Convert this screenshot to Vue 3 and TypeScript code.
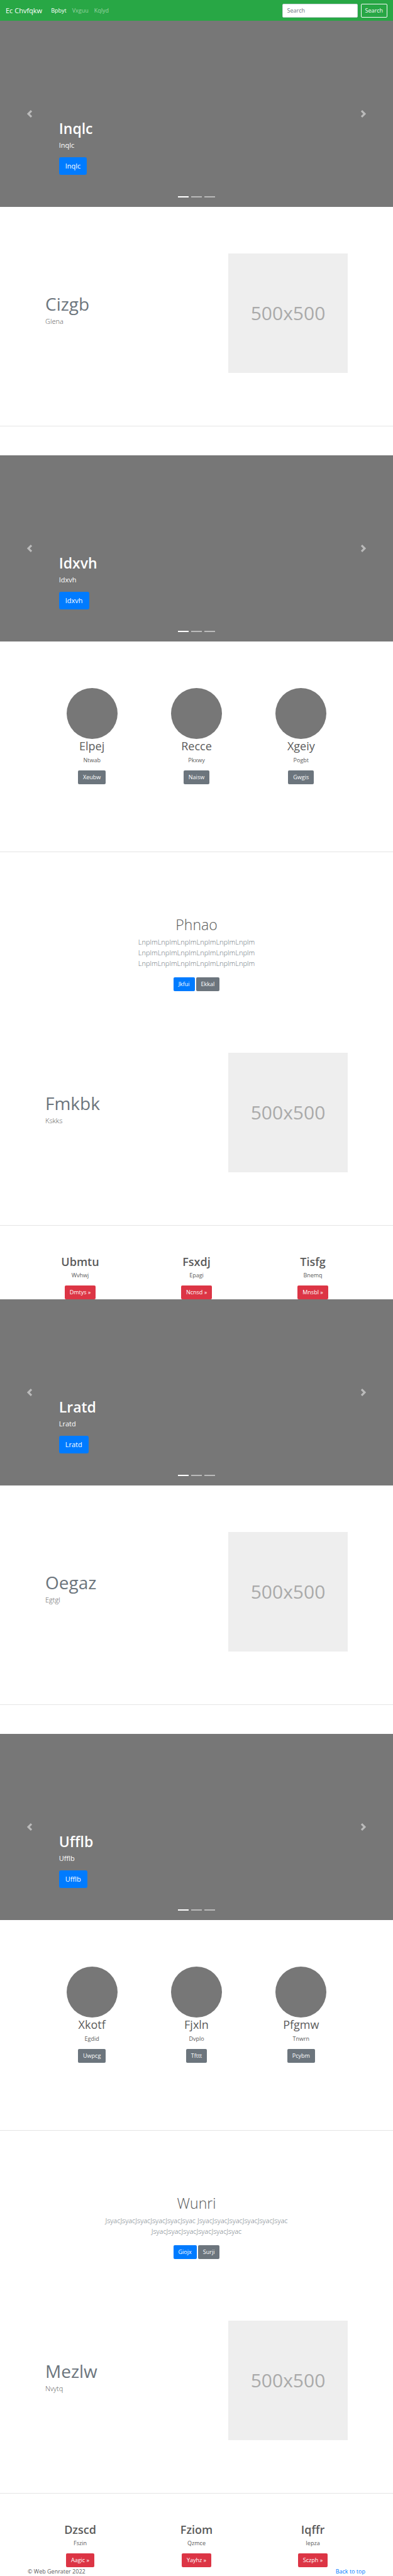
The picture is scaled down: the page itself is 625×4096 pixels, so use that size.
<script setup lang="ts">
interface Item {
  title: string
  text: string
  action: string
}

interface Part {
  hero: string
  heroWithFeature: { title: string; text: string }
  secondHero: string
  people: Item[]
  intro: { title: string; text: string; primary: string; secondary: string }
  feature: { title: string; text: string }
  columns: Item[]
}

const navItems = ['Bpbyt', 'Vxguu', 'Kqlyd']
const slides = [0, 1, 2]

const repeat = (word: string): string => Array(3).fill(word.repeat(6)).join(' ')

const parts: Part[] = [
  {
    hero: 'Inqlc',
    heroWithFeature: { title: 'Cizgb', text: 'Glena' },
    secondHero: 'Idxvh',
    people: [
      { title: 'Elpej', text: 'Ntwab', action: 'Xeubw' },
      { title: 'Recce', text: 'Pkxwy', action: 'Naisw' },
      { title: 'Xgeiy', text: 'Pogbt', action: 'Gwgis' },
    ],
    intro: { title: 'Phnao', text: repeat('Lnplm'), primary: 'Jkfui', secondary: 'Ekkal' },
    feature: { title: 'Fmkbk', text: 'Kskks' },
    columns: [
      { title: 'Ubmtu', text: 'Wvhwj', action: 'Dmtys' },
      { title: 'Fsxdj', text: 'Epagi', action: 'Ncnsd' },
      { title: 'Tisfg', text: 'Bnemq', action: 'Mnsbl' },
    ],
  },
  {
    hero: 'Lratd',
    heroWithFeature: { title: 'Oegaz', text: 'Egtgl' },
    secondHero: 'Ufflb',
    people: [
      { title: 'Xkotf', text: 'Egdid', action: 'Uwpcg' },
      { title: 'Fjxln', text: 'Dvplo', action: 'Tfttt' },
      { title: 'Pfgmw', text: 'Tnwrn', action: 'Pcybm' },
    ],
    intro: { title: 'Wunri', text: repeat('Jsyac'), primary: 'Giojx', secondary: 'Surji' },
    feature: { title: 'Mezlw', text: 'Nvytq' },
    columns: [
      { title: 'Dzscd', text: 'Fszin', action: 'Aagic' },
      { title: 'Fziom', text: 'Qzmce', action: 'Yayhz' },
      { title: 'Iqffr', text: 'Iepza', action: 'Sczph' },
    ],
  },
]
</script>

<template>
  <div id="top" class="page">
    <header class="navbar">
      <a class="brand" href="#top">Ec Chvfqkw</a>
      <nav class="links">
        <a v-for="(item, i) in navItems" :key="item" href="#top" :class="{ active: i === 0 }">{{ item }}</a>
      </nav>
      <form class="search" @submit.prevent>
        <input type="search" placeholder="Search" aria-label="Search" />
        <button type="submit">Search</button>
      </form>
    </header>

    <main>
      <template v-for="part in parts" :key="part.hero">
        <template v-for="(name, h) in [part.hero, part.secondHero]" :key="name">
          <section class="carousel">
            <button class="control prev" type="button" aria-label="Previous">
              <svg viewBox="0 0 8 8"><path d="M5.25 0l-4 4 4 4 1.5-1.5-2.5-2.5 2.5-2.5-1.5-1.5z" /></svg>
            </button>
            <div class="caption">
              <h1>{{ name }}</h1>
              <p>{{ name }}</p>
              <a class="btn large primary" href="#top">{{ name }}</a>
            </div>
            <button class="control next" type="button" aria-label="Next">
              <svg viewBox="0 0 8 8"><path d="M2.75 0l-1.5 1.5 2.5 2.5-2.5 2.5 1.5 1.5 4-4-4-4z" /></svg>
            </button>
            <div class="indicators">
              <button
                v-for="s in slides"
                :key="s"
                type="button"
                :class="{ active: s === 0 }"
                :aria-label="`Slide ${s + 1}`"
              ></button>
            </div>
          </section>

          <template v-if="h === 0">
            <section class="featurette">
              <div class="feature-text">
                <h2>{{ part.heroWithFeature.title }}</h2>
                <p>{{ part.heroWithFeature.text }}</p>
              </div>
              <div class="placeholder">500x500</div>
            </section>
            <hr class="spaced" />
          </template>
        </template>

        <section class="people">
          <article v-for="person in part.people" :key="person.title">
            <div class="avatar"></div>
            <h2>{{ person.title }}</h2>
            <p>{{ person.text }}</p>
            <a class="btn secondary" href="#top">{{ person.action }}</a>
          </article>
        </section>
        <hr />

        <section class="intro">
          <h1>{{ part.intro.title }}</h1>
          <p>{{ part.intro.text }}</p>
          <div class="actions">
            <a class="btn primary" href="#top">{{ part.intro.primary }}</a>
            <a class="btn secondary" href="#top">{{ part.intro.secondary }}</a>
          </div>
        </section>

        <section class="featurette">
          <div class="feature-text">
            <h2>{{ part.feature.title }}</h2>
            <p>{{ part.feature.text }}</p>
          </div>
          <div class="placeholder">500x500</div>
        </section>
        <hr />

        <section class="columns">
          <article v-for="column in part.columns" :key="column.title">
            <h2>{{ column.title }}</h2>
            <p>{{ column.text }}</p>
            <a class="btn danger" href="#top">{{ column.action }} »</a>
          </article>
        </section>
      </template>
    </main>

    <footer class="footer">
      <span>© Web Genrater 2022</span>
      <a href="#top">Back to top</a>
    </footer>
  </div>
</template>

<style>
body {
  background: #fff;
}
</style>

<style scoped>
.page,
.page * {
  box-sizing: border-box;
}

.page {
  font-family: 'Open Sans', 'Noto Sans', sans-serif;
  font-size: 9px;
  line-height: 14px;
  color: #5a5a5a;
}

h1,
h2,
p {
  margin: 0;
}

a {
  text-decoration: none;
}

button,
input {
  font: inherit;
  margin: 0;
}

.navbar {
  display: flex;
  align-items: center;
  height: 33px;
  padding: 0 9px;
  background: #28a745;
}

.brand {
  margin-right: 14px;
  font-size: 11px;
  color: #fff;
}

.links {
  display: flex;
  flex: 1;
  gap: 9px;
}

.links a {
  color: rgba(255, 255, 255, 0.5);
}

.links a.active {
  color: #fff;
}

.search {
  display: flex;
  gap: 5px;
}

.search input {
  width: 120px;
  height: 22px;
  padding: 0 7px;
  border: 1px solid #ced4da;
  border-radius: 2px;
  background: #fff;
  color: #495057;
}

.search input::placeholder {
  color: #6c757d;
}

.search button {
  height: 22px;
  padding: 0 6px;
  border: 1px solid #f8f9fa;
  border-radius: 2px;
  background: transparent;
  color: #f8f9fa;
}

.carousel {
  position: relative;
  display: grid;
  grid-template-columns: 15% 1fr 15%;
  height: 296px;
  background: #777;
  color: #fff;
}

.control {
  display: flex;
  align-items: center;
  justify-content: center;
  padding: 0;
  border: 0;
  background: none;
  opacity: 0.5;
}

.control svg {
  width: 12px;
  height: 12px;
  fill: #fff;
}

.caption {
  align-self: end;
  padding-bottom: 51px;
}

.caption h1 {
  margin-bottom: 4px;
  font-size: 23px;
  font-weight: 600;
  line-height: 28px;
}

.caption p {
  margin-bottom: 11px;
  font-size: 11px;
  line-height: 17px;
}

.indicators {
  position: absolute;
  right: 0;
  bottom: 15px;
  left: 0;
  display: flex;
  justify-content: center;
  gap: 4px;
}

.indicators button {
  width: 17px;
  height: 2px;
  padding: 0;
  border: 0;
  background: #fff;
  opacity: 0.5;
}

.indicators button.active {
  opacity: 1;
}

.btn {
  display: inline-block;
  height: 22px;
  padding: 0 8px;
  border-radius: 2px;
  line-height: 22px;
  color: #fff;
  vertical-align: top;
}

.btn.large {
  height: 28px;
  padding: 0 10px;
  border-radius: 3px;
  font-size: 11px;
  line-height: 28px;
}

.primary {
  background: #007bff;
}

.secondary {
  background: #6c757d;
}

.danger {
  background: #dc3545;
}

.featurette {
  display: flex;
  justify-content: space-between;
  padding: 74px 72px 84px;
}

.feature-text {
  padding-top: 63px;
}

.feature-text h2 {
  margin-bottom: 2px;
  font-size: 28px;
  font-weight: 400;
  line-height: 34px;
  color: #6c757d;
}

.feature-text p {
  font-size: 11px;
  font-weight: 300;
  line-height: 17px;
}

.placeholder {
  display: flex;
  align-items: center;
  justify-content: center;
  width: 190px;
  aspect-ratio: 1;
  background: #eee;
  font-size: 30px;
  color: #aaa;
}

hr {
  height: 1px;
  margin: 0;
  border: 0;
  background: #e5e5e5;
}

hr.spaced {
  margin-bottom: 46px;
}

.people {
  display: grid;
  grid-template-columns: repeat(3, 1fr);
  padding: 74px 63px 107px;
  text-align: center;
}

.avatar {
  width: 81px;
  height: 81px;
  margin: 0 auto;
  border-radius: 50%;
  background: #777;
}

.people h2 {
  margin-bottom: 5px;
  font-size: 18px;
  font-weight: 400;
  line-height: 22px;
}

.people p,
.columns p {
  margin-bottom: 9px;
}

.intro {
  max-width: 486px;
  margin: 0 auto;
  padding: 101px 76px 24px;
  text-align: center;
}

.intro h1 {
  margin-bottom: 5px;
  font-size: 23px;
  font-weight: 300;
  line-height: 28px;
}

.intro p {
  margin-bottom: 14px;
  font-size: 11px;
  font-weight: 300;
  line-height: 17px;
  color: #6c757d;
}

.actions {
  display: flex;
  justify-content: center;
  gap: 2px;
}

.columns {
  display: grid;
  grid-template-columns: repeat(3, 1fr);
  padding: 46px 35px 0;
  text-align: center;
}

.columns h2 {
  margin-bottom: 4px;
  font-size: 18px;
  font-weight: 600;
  line-height: 22px;
}

.footer {
  display: flex;
  justify-content: space-between;
  padding: 0 44px;
}

.footer a {
  color: #007bff;
}
</style>
